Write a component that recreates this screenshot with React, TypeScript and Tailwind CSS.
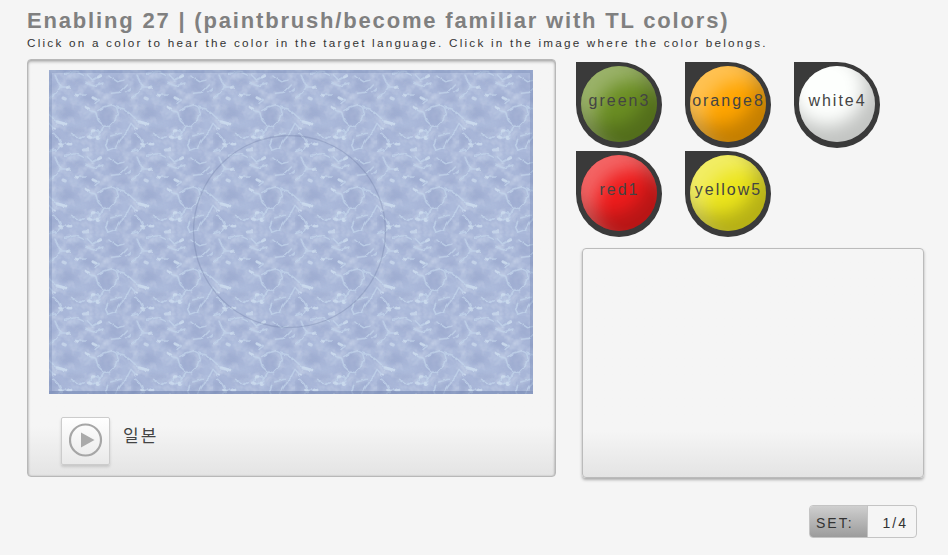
import React from "react";

const colors = [
  { name: "green3", fill: "bg-[#6b8e23]" },
  { name: "orange8", fill: "bg-[#ffa500]" },
  { name: "white4", fill: "bg-[#fdfffd]" },
  { name: "red1", fill: "bg-[#ee1c1c]" },
  { name: "yellow5", fill: "bg-[#ece51c]" },
];

function Ripples() {
  return (
    <g fill="none" strokeLinecap="round" strokeLinejoin="round">
      <g fill="#99a7cd" stroke="none" opacity="0.6" filter="url(#soft)">
        <ellipse cx="172" cy="138" rx="28" ry="30" />
        <ellipse cx="205" cy="45" rx="28" ry="24" />
        <ellipse cx="48" cy="130" rx="30" ry="18" />
        <ellipse cx="15" cy="210" rx="18" ry="20" />
        <ellipse cx="200" cy="215" rx="26" ry="20" />
        <ellipse cx="120" cy="85" rx="38" ry="12" />
        <ellipse cx="15" cy="55" rx="12" ry="20" />
        <ellipse cx="75" cy="182" rx="28" ry="12" />
        <ellipse cx="85" cy="35" rx="22" ry="12" />
        <ellipse cx="225" cy="90" rx="18" ry="10" />
      </g>
      <g stroke="#b6c6e3" strokeWidth="14" opacity="0.4" filter="url(#soft)">
        <path d="M35 95L80 75L100 108M10 135L55 165L110 160M120 200L145 185L155 225M60 222L110 235M60 15L110 20L145 8M205 115L235 105M225 150L230 190M28 40L34 60L20 75M110 130L140 135M200 235L175 240" />
      </g>
      <g stroke="#c2d4eb" strokeWidth="4.5" opacity="0.75" filter="url(#fine)">
        <path d="M18 15L29 38L35 50L22 68L0 84M35 50L60 52M110 110L122 121L140 127L148 152L165 168L180 170L196 153L207 129L203 112L188 104L166 111L146 122M203 112L226 117L246 134M0 134L20 152L54 163M0 160L15 177M246 160L232 187L214 210L200 232L176 241M14 190L28 205L38 223L25 238L0 245M38 223L67 222M165 168L158 180L145 204M120 200L131 180L149 184L152 196L134 204L120 200M176 208L170 226L177 241M180 18L205 35L225 30M188 70L214 67L235 45M80 76L112 75M130 83L151 90L138 100M50 10L80 5L105 16M115 14L130 30L157 18M110 40L135 48L162 39M65 190L90 207L103 200M185 198L214 190M232 67L246 56" />
      </g>
      <g stroke="#d0dff0" strokeWidth="9" opacity="0.65" filter="url(#fine)">
        <path d="M55 53L63 51M42 84L49 87M80 75L84 77M132 83L140 88M111 111L119 116M24 156L50 162M14 177L17 177M58 222L66 222M130 183L134 182M35 224L38 228M145 202L149 204M118 201L125 203M103 240L119 239M148 21L155 17" />
      </g>
    </g>
  );
}

function Water() {
  return (
    <svg className="block h-[324px] w-[484px]" viewBox="0 0 484 324">
      <defs>
        <filter id="soft" filterUnits="userSpaceOnUse" x="-30" y="-30" width="306" height="306">
          <feGaussianBlur stdDeviation="6" />
        </filter>
        <filter id="fine" filterUnits="userSpaceOnUse" x="-30" y="-30" width="306" height="306">
          <feTurbulence type="fractalNoise" baseFrequency="0.07" numOctaves="1" seed="4" result="noise" />
          <feDisplacementMap in="SourceGraphic" in2="noise" scale="10" xChannelSelector="R" yChannelSelector="G" />
          <feGaussianBlur stdDeviation="2.2" />
        </filter>
        <filter id="mottle" x="0" y="0" width="100%" height="100%">
          <feTurbulence type="fractalNoise" baseFrequency="0.09" numOctaves="3" seed="7" stitchTiles="stitch" />
          <feColorMatrix values="0 0 0 0 .8  0 0 0 0 .88  0 0 0 0 .95  1 0 0 0 -.42" />
        </filter>
        <pattern id="water" width="82" height="82" patternUnits="userSpaceOnUse">
          <rect width="82" height="82" fill="#a8b6d8" />
          <rect width="82" height="82" filter="url(#mottle)" />
          <g transform="scale(.33333)">
            <Ripples />
          </g>
        </pattern>
      </defs>
      <rect width="484" height="324" fill="url(#water)" />
      <circle cx="240.5" cy="161.5" r="96" fill="none" stroke="#5f6f98" strokeOpacity=".27" strokeWidth="1.3" />
      <rect x="1.5" y="1.5" width="481" height="321" fill="none" stroke="#53689b" strokeOpacity=".22" strokeWidth="3" />
      <path d="M0 322.5H484" stroke="#53689b" strokeOpacity=".2" strokeWidth="3" />
    </svg>
  );
}

function ColorButton({ name, fill }: { name: string; fill: string }) {
  return (
    <button className="flex h-[86px] w-[86px] items-start rounded-full rounded-tl-none bg-[#3a3a3a] pt-1 pl-[5px]">
      <span
        className={`flex h-[76px] w-[76px] items-center justify-center rounded-full pb-[6px] pl-px text-base tracking-[2px] whitespace-nowrap text-[#444] shadow-[inset_-10px_-16px_18px_rgba(0,0,0,0.23),inset_14px_14px_18px_rgba(255,255,255,0.32)] ${fill}`}
      >
        {name}
      </span>
    </button>
  );
}

export default function App() {
  return (
    <main className="h-[555px] w-[948px] overflow-hidden bg-[#f5f5f5] pl-[27px] font-['Liberation_Sans','Noto_Sans_CJK_KR',sans-serif] text-[#333]">
      <header className="h-[59px] pt-[8px]">
        <h1 className="text-[22px] leading-[25px] font-bold tracking-[1.82px] whitespace-nowrap text-[#808080]">
          Enabling 27 | (paintbrush/become familiar with TL colors)
        </h1>
        <p className="pt-[2px] text-[11.7px] leading-[16px] tracking-[2.23px] whitespace-nowrap">
          Click on a color to hear the color in the target language. Click in the image where the color belongs.
        </p>
      </header>
      <div className="flex">
        <section className="h-[418px] w-[529px] rounded-[4px] border border-[#b8b8b8] bg-linear-to-b from-[#f5f5f5] from-88% to-[#e4e4e4] pt-[10px] pl-[21px] shadow-[inset_0_2px_3px_rgba(0,0,0,0.25),inset_0_0_2px_rgba(0,0,0,0.2)]">
          <Water />
          <div className="flex pt-[23px] pl-3">
            <button className="flex h-12 w-[49px] items-start justify-center rounded-[2px] border border-[#ccc] bg-linear-to-b from-white to-[#e9e9e9] pt-[5px] shadow-[0_2px_3px_rgba(0,0,0,0.15)]">
              <svg className="h-[34px] w-[34px]" viewBox="0 0 34 34">
                <circle cx="16.5" cy="17" r="15.5" fill="none" stroke="#a6a6a6" strokeWidth="2.2" />
                <path d="M12 9.5L25.5 17L12 24.5Z" fill="#aaa" />
              </svg>
            </button>
            <span className="pt-[8px] pl-[13px] text-[17px] leading-6 tracking-[2px] text-[#444]">일본</span>
          </div>
        </section>
        <aside className="pt-[3px] pl-5">
          <div className="grid grid-cols-[repeat(3,86px)] gap-x-[23px] gap-y-[3px]">
            {colors.map((color) => (
              <ColorButton key={color.name} {...color} />
            ))}
          </div>
          <div className="mt-[11px] ml-[6px] h-[230px] w-[342px] rounded-[4px] border border-[#bbb] bg-linear-to-b from-[#f5f5f5] from-80% to-[#e4e4e4] shadow-[0_2px_3px_rgba(0,0,0,0.3)]" />
          <div className="mt-[27px] ml-[233px] flex h-[33px] w-[108px] overflow-hidden rounded-[4px] border border-[#c4c4c4] text-sm leading-[34px]">
            <span className="w-[58px] border-r border-[#c4c4c4] bg-linear-to-b from-[#cfcfcf] to-[#9c9c9c] pl-[6px] tracking-[2px]">
              SET:
            </span>
            <span className="flex-1 pr-[8px] text-right tracking-[2px]">1/4</span>
          </div>
        </aside>
      </div>
    </main>
  );
}
